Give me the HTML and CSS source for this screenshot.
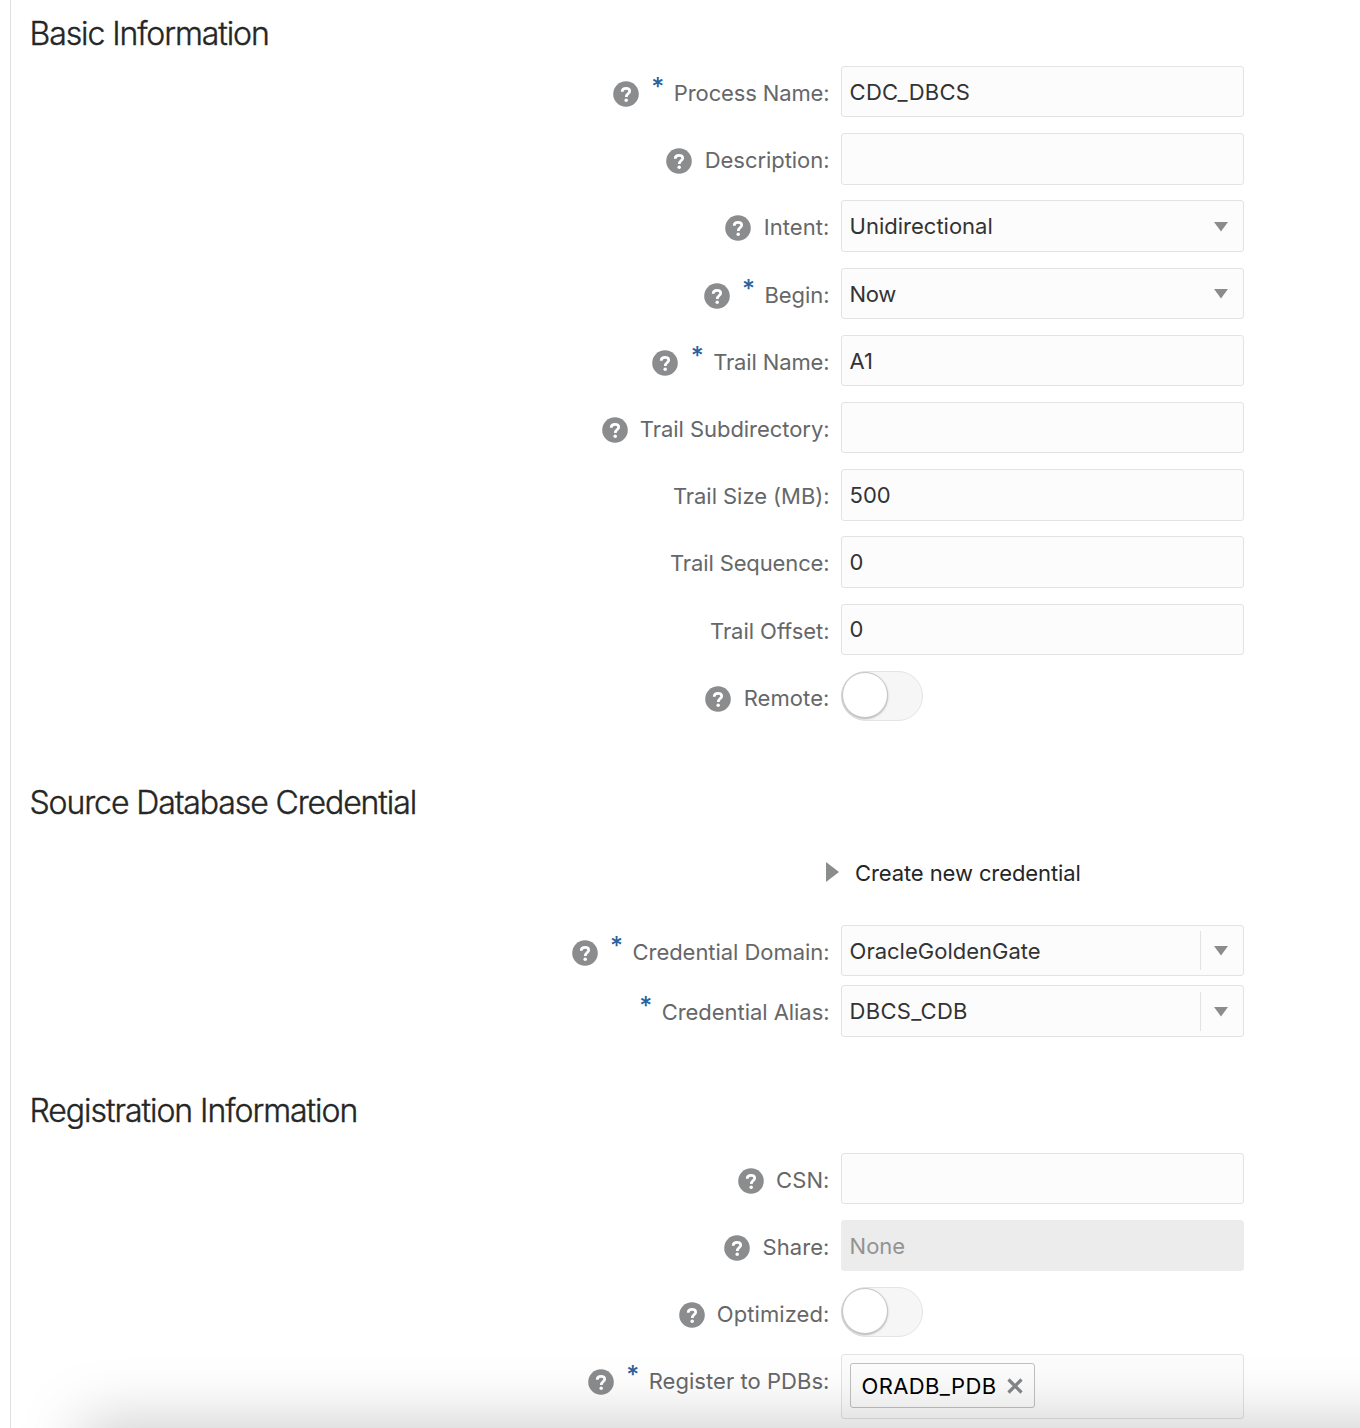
FILE: index.html
```
<!DOCTYPE html>
<html lang="en">
<head>
<meta charset="utf-8">
<title>Extract Options</title>
<link rel="stylesheet" href="styles.css">
</head>
<body>
<svg class="defs" aria-hidden="true">
  <symbol id="help" viewBox="0 0 26 26">
    <circle cx="13" cy="13" r="12.8" fill="#8b8c8e"/>
    <path d="M9.2 10.7C9.2 8.5 10.8 7.4 13 7.4C15.2 7.4 16.7 8.5 16.7 10.2C16.7 12.6 13.3 12.6 13.3 15.9" fill="none" stroke="#fff" stroke-width="2.7"/>
    <circle cx="13.2" cy="19.2" r="1.75" fill="#fff"/>
  </symbol>
  <symbol id="down" viewBox="0 0 14 10"><path d="M0 0H14L7 9.6Z" fill="#8b8c8e"/></symbol>
</svg>
<main class="panel">
  <section class="section basic">
    <h2>Basic Information</h2>
    <div class="rows">
      <div class="row"><div class="label"><svg class="help"><use href="#help"/></svg><span class="star">*</span><label class="snug">Process Name:</label></div><div class="field caps">CDC_DBCS</div></div>
      <div class="row"><div class="label"><svg class="help"><use href="#help"/></svg><label>Description:</label></div><div class="field"></div></div>
      <div class="row"><div class="label"><svg class="help"><use href="#help"/></svg><label class="wide">Intent:</label></div><div class="field">Unidirectional<svg class="arrow"><use href="#down"/></svg></div></div>
      <div class="row"><div class="label"><svg class="help"><use href="#help"/></svg><span class="star">*</span><label>Begin:</label></div><div class="field tight">Now<svg class="arrow"><use href="#down"/></svg></div></div>
      <div class="row"><div class="label"><svg class="help"><use href="#help"/></svg><span class="star">*</span><label class="snug">Trail Name:</label></div><div class="field">A1</div></div>
      <div class="row"><div class="label"><svg class="help"><use href="#help"/></svg><label>Trail Subdirectory:</label></div><div class="field"></div></div>
      <div class="row"><div class="label"><label>Trail Size (MB):</label></div><div class="field">500</div></div>
      <div class="row"><div class="label"><label class="snug">Trail Sequence:</label></div><div class="field">0</div></div>
      <div class="row"><div class="label"><label>Trail Offset:</label></div><div class="field">0</div></div>
      <div class="row"><div class="label"><svg class="help"><use href="#help"/></svg><label class="wide">Remote:</label></div><div class="toggle"><span class="knob"></span></div></div>
    </div>
  </section>

  <section class="section credential">
    <h2>Source Database Credential</h2>
    <div class="disclosure"><svg class="right" viewBox="0 0 13 20"><path d="M0 0L13 10L0 20Z" fill="#8b8c8e"/></svg><span>Create new credential</span></div>
    <div class="rows">
      <div class="row"><div class="label"><svg class="help"><use href="#help"/></svg><span class="star">*</span><label>Credential Domain:</label></div><div class="field">OracleGoldenGate<span class="opener"><svg class="arrow"><use href="#down"/></svg></span></div></div>
      <div class="row"><div class="label"><span class="star">*</span><label>Credential Alias:</label></div><div class="field caps">DBCS_CDB<span class="opener"><svg class="arrow"><use href="#down"/></svg></span></div></div>
    </div>
  </section>

  <section class="section registration">
    <h2>Registration Information</h2>
    <div class="rows">
      <div class="row"><div class="label"><svg class="help"><use href="#help"/></svg><label class="wide">CSN:</label></div><div class="field"></div></div>
      <div class="row"><div class="label"><svg class="help"><use href="#help"/></svg><label class="wide">Share:</label></div><div class="field disabled">None</div></div>
      <div class="row"><div class="label"><svg class="help"><use href="#help"/></svg><label class="wide">Optimized:</label></div><div class="toggle"><span class="knob"></span></div></div>
      <div class="row tall"><div class="label"><svg class="help"><use href="#help"/></svg><span class="star">*</span><label class="mid">Register to PDBs:</label></div><div class="field multi"><span class="chip">ORADB_PDB<svg class="close" viewBox="0 0 16 16"><path d="M1.5 1.5L14.5 14.5M14.5 1.5L1.5 14.5" stroke="#858688" stroke-width="3.2"/></svg></span></div></div>
    </div>
  </section>
</main>
<div class="shade"><div class="drawer"></div></div>
</body>
</html>
```

FILE: styles.css
```
* { box-sizing: border-box; }
body {
  margin: 0;
  height: 1428px;
  overflow: hidden;
  background: #fff;
  color: #333;
  font-family: Inter, "Liberation Sans", sans-serif;
  font-size: 22px;
}
.defs { position: absolute; width: 0; height: 0; }
.panel {
  height: 1428px;
  margin-left: 10px;
  padding: 13px 0 0 19px;
  border-left: 1px solid #dedfdf;
  overflow: hidden;
}
h2 {
  margin: 0 0 0 -0.5px;
  height: 40px;
  line-height: 42px;
  font-size: 32px;
  font-weight: 300;
  letter-spacing: -1.1px;
  color: #252626;
  -webkit-text-stroke: 0.4px #252626;
}
.registration h2 { letter-spacing: -1.04px; }
.rows { display: flex; flex-direction: column; gap: 15.8px; }
.basic .rows { margin-top: 13px; }
.credential { margin-top: 59.8px; }
.credential .rows { margin-top: 38px; gap: 9px; }
.registration { margin-top: 53.2px; }
.registration .rows { margin-top: 23px; }
.row {
  display: grid;
  grid-template-columns: 799.5px 403px;
  grid-template-rows: 100%;
  column-gap: 11.5px;
  height: 51.4px;
}
.row.tall { height: 64.5px; }
.label {
  display: flex;
  justify-content: flex-end;
  height: 54px;
  line-height: 54px;
  letter-spacing: -0.05px;
  color: #666768;
}
.snug { letter-spacing: -0.13px; }
.wide { letter-spacing: 0.08px; }
.mid { letter-spacing: 0.05px; }
.help { width: 26px; height: 26px; margin: 15px 12.3px 0 0; }
.star {
  width: 14px;
  margin-right: 8.5px;
  color: #2a629e;
  font-size: 25px;
  font-weight: 500;
  line-height: 43px;
}
.field {
  display: flex;
  align-items: center;
  padding: 0.6px 15px 0 7.6px;
  letter-spacing: 0;
  background: #fcfcfc;
  border: 1px solid #e2e3e3;
  border-radius: 3px;
}
.caps { letter-spacing: 0.28px; }
.tight { letter-spacing: -0.4px; }
.arrow { width: 14px; height: 10px; margin: 1px 0 0 auto; }
.opener {
  display: flex;
  align-items: center;
  margin-left: auto;
  padding-left: 13px;
  height: 39px;
  border-left: 1px solid #e2e3e3;
}
.disabled { background: #ececec; border-color: #ececec; color: #939393; }
.toggle {
  width: 82px;
  height: 50px;
  background: #f6f6f6;
  border: 1px solid #e4e4e4;
  border-radius: 25px;
}
.knob {
  display: block;
  width: 46px;
  height: 46px;
  background: #fff;
  border: 1px solid #c6c6c6;
  border-radius: 50%;
  box-shadow: 0 1px 2px rgba(0, 0, 0, 0.28);
}
.disclosure {
  display: flex;
  align-items: center;
  height: 28px;
  margin: 37px 0 0 796px;
  letter-spacing: -0.1px;
  color: #252626;
}
.right { width: 13px; height: 20px; margin: -1px 16px 0 0; }
.multi { padding: 0 15px 0 8px; align-items: flex-start; }
.chip {
  display: flex;
  align-items: center;
  width: 185px;
  height: 45px;
  margin-top: 8px;
  padding: 1px 0 0 10.5px;
  letter-spacing: 0.38px;
  color: #000;
  border: 1px solid #bfc0c0;
  border-radius: 3px;
}
.close { width: 16px; height: 16px; margin-left: 10.5px; }

/* Shadow cast upwards by the drawer below the visible area */
.shade { position: absolute; inset: 0; height: 1428px; overflow: hidden; pointer-events: none; }
.drawer {
  position: absolute;
  top: 1420px;
  left: 80px;
  width: 1600px;
  height: 600px;
  border-radius: 16px;
  background: rgba(0, 0, 0, 0.19);
  filter: blur(30px);
}
```
